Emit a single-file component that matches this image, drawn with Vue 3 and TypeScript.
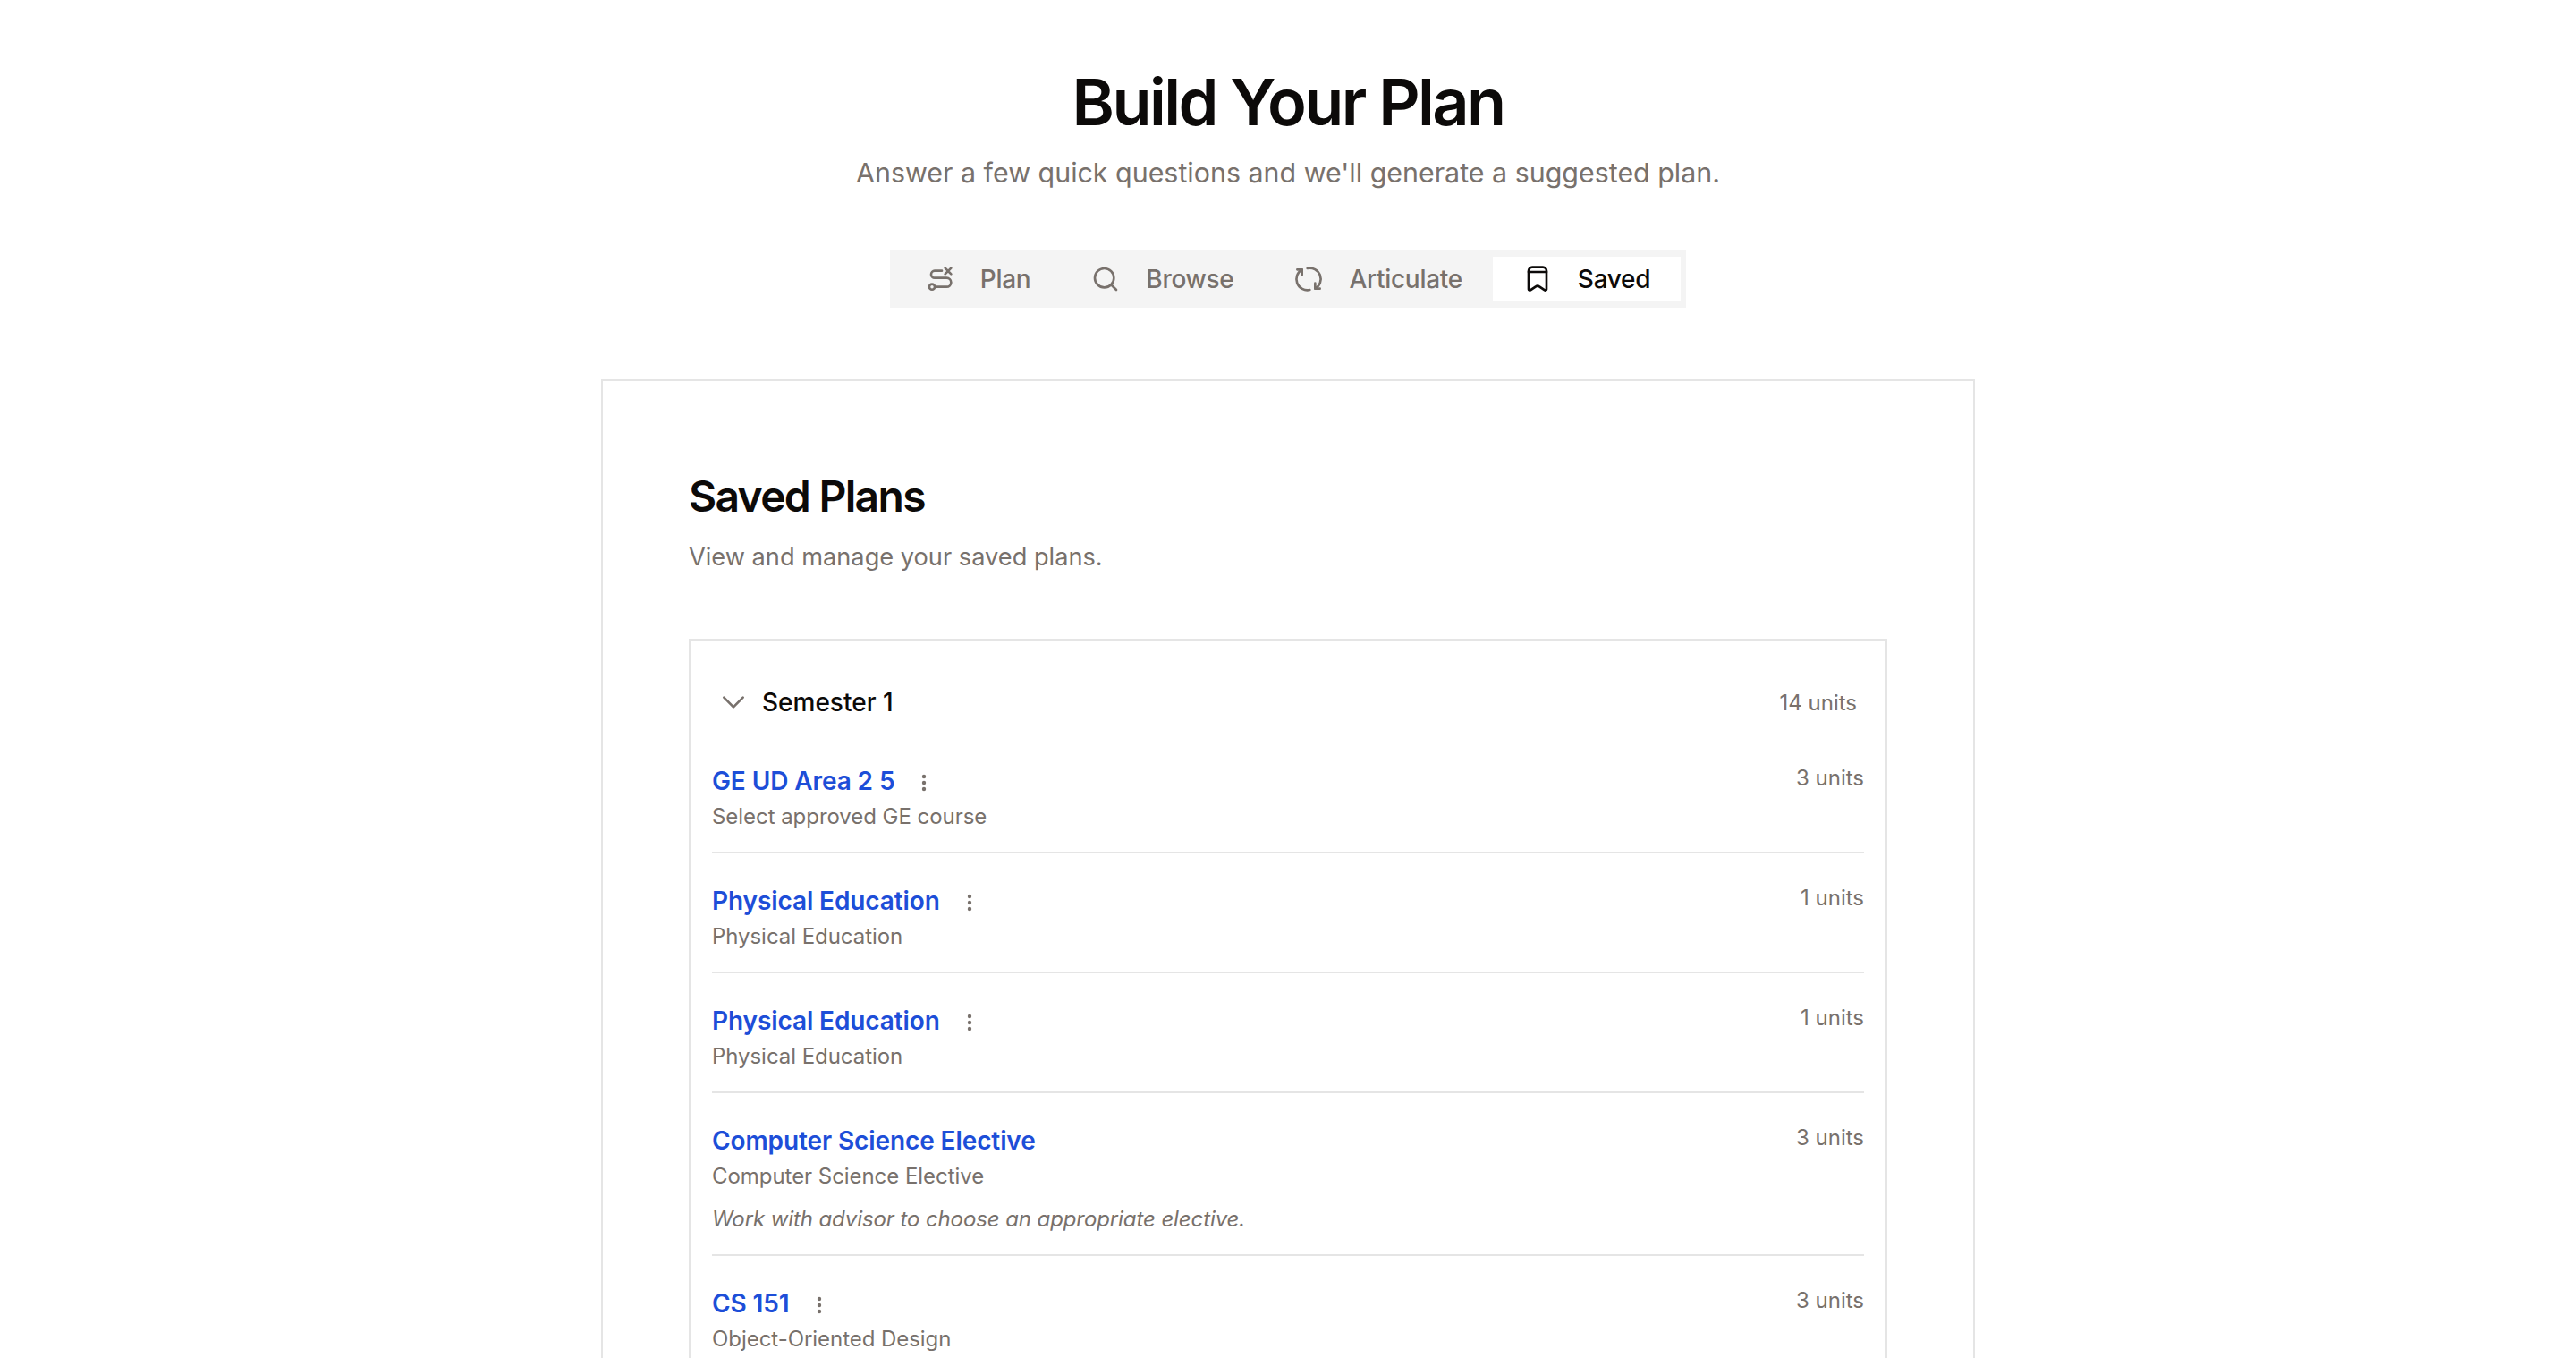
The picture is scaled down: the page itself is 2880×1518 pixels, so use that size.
<script setup lang="ts">
interface Course {
  title: string
  desc: string
  units: number
  note?: string
  menu: boolean
}

const tabs = [
  { id: 'plan', label: 'Plan' },
  { id: 'browse', label: 'Browse' },
  { id: 'articulate', label: 'Articulate' },
  { id: 'saved', label: 'Saved' },
]

const courses: Course[] = [
  { title: 'GE UD Area 2 5', desc: 'Select approved GE course', units: 3, menu: true },
  { title: 'Physical Education', desc: 'Physical Education', units: 1, menu: true },
  { title: 'Physical Education', desc: 'Physical Education', units: 1, menu: true },
  {
    title: 'Computer Science Elective',
    desc: 'Computer Science Elective',
    units: 3,
    note: 'Work with advisor to choose an appropriate elective.',
    menu: false,
  },
  { title: 'CS 151', desc: 'Object-Oriented Design', units: 3, menu: true },
]
</script>

<template>
  <div class="page">
    <h1 class="title">Build Your Plan</h1>
    <p class="subtitle">Answer a few quick questions and we'll generate a suggested plan.</p>

    <div class="tabs">
      <button v-for="tab in tabs" :key="tab.id" class="tab" :class="{ active: tab.id === 'saved' }">
        <svg class="tab-icon" viewBox="0 0 24 24">
          <template v-if="tab.id === 'plan'">
            <circle cx="5.250" cy="18.500" r="2.300" />
            <path d="M13.500 5H7.500a3 3 0 0 0 0 6h10a3.750 3.750 0 0 1 0 7.500H9" />
            <path d="m16.250 2.750 5 5M21.250 2.750l-5 5" />
          </template>
          <template v-else-if="tab.id === 'browse'">
            <circle cx="11" cy="11" r="8" />
            <path d="m21 21-4.300-4.300" />
          </template>
          <template v-else-if="tab.id === 'articulate'">
            <path d="M11 3a9.200 9.200 0 0 1 6.500 17" />
            <path d="M13 21a9.200 9.200 0 0 1-6.500-17" />
            <path d="M2.500 4h4v4.500" />
            <path d="M21.500 20h-4v-4.500" />
          </template>
          <template v-else>
            <path d="M4.500 5a3 3 0 0 1 3-3h9a3 3 0 0 1 3 3v15.500a1 1 0 0 1-1.500.8l-4.500-3a2.500 2.500 0 0 0-3 0l-4.500 3a1 1 0 0 1-1.500-.8Z" />
            <path d="M4.500 6h15" />
          </template>
        </svg>
        <span>{{ tab.label }}</span>
      </button>
    </div>

    <section class="card">
      <h2 class="card-title">Saved Plans</h2>
      <p class="card-sub">View and manage your saved plans.</p>

      <div class="semester">
        <div class="semester-head">
          <div class="semester-name">
            <svg class="chevron" viewBox="0 0 24 24"><path d="m4 8 8 8 8-8" /></svg>
            <span>Semester 1</span>
          </div>
          <span class="units">14 units</span>
        </div>

        <div v-for="(course, i) in courses" :key="i" class="course">
          <div class="course-main">
            <div class="course-top">
              <a class="course-title">{{ course.title }}</a>
              <svg v-if="course.menu" class="dots" viewBox="0 0 24 24">
                <circle cx="12" cy="5" r="2.200" />
                <circle cx="12" cy="12" r="2.200" />
                <circle cx="12" cy="19" r="2.200" />
              </svg>
            </div>
            <div class="course-desc">{{ course.desc }}</div>
            <div v-if="course.note" class="course-note">{{ course.note }}</div>
          </div>
          <span class="units course-units">{{ course.units }} units</span>
        </div>
      </div>
    </section>
  </div>
</template>

<style scoped>
.page {
  display: flex;
  flex-direction: column;
  align-items: center;
  height: 1518px;
  overflow: hidden;
  font-family: Inter, "Liberation Sans", sans-serif;
  color: #0c0a09;
}

.title {
  margin: 0;
  padding-top: 74px;
  font-size: 72px;
  line-height: 80px;
  font-weight: 600;
  letter-spacing: -2.6px;
}

.subtitle {
  margin: 15px 0 0;
  font-size: 30.4px;
  line-height: 48px;
  color: #78716c;
}

.tabs {
  display: flex;
  flex-shrink: 0;
  margin-top: 63px;
  padding: 7px 6px;
  background: #f4f4f4;
}

.tab {
  display: flex;
  align-items: center;
  gap: 29px;
  height: 50px;
  padding: 0 34px;
  border: none;
  background: none;
  font: inherit;
  font-size: 28px;
  font-weight: 500;
  letter-spacing: -0.3px;
  color: #78716c;
}

.tab.active {
  background: #fff;
  color: #0c0a09;
}

.tab-icon {
  width: 32px;
  height: 32px;
  fill: none;
  stroke: currentColor;
  stroke-width: 2;
  stroke-linecap: round;
  stroke-linejoin: round;
}

.card {
  box-sizing: border-box;
  flex-shrink: 0;
  width: 1536px;
  margin-top: 80px;
  padding: 96px 96px 0;
  border: 2px solid #e5e5e5;
}

.card-title {
  margin: 0;
  font-size: 48px;
  line-height: 65px;
  font-weight: 600;
  letter-spacing: -1.7px;
}

.card-sub {
  margin: 16px 0 0;
  font-size: 27.2px;
  line-height: 40px;
  color: #78716c;
}

.semester {
  margin-top: 71px;
  padding: 0 24px;
  border: 2px solid #e5e5e5;
}

.semester-head {
  box-sizing: border-box;
  display: flex;
  align-items: center;
  justify-content: space-between;
  height: 104px;
  padding: 34px 8px 0;
}

.semester-name {
  display: flex;
  align-items: center;
  gap: 16px;
  font-size: 28px;
  font-weight: 500;
}

.chevron {
  width: 32px;
  height: 32px;
  fill: none;
  stroke: #78716c;
  stroke-width: 2;
  stroke-linecap: round;
  stroke-linejoin: round;
}

.units {
  font-size: 24px;
  color: #78716c;
}

.course {
  display: flex;
  justify-content: space-between;
  padding: 35px 0 21px;
  border-bottom: 2px solid #e5e5e5;
}

.course:last-child {
  border-bottom: none;
}

.course-top {
  display: flex;
  align-items: center;
  gap: 21px;
  height: 36px;
}

.course-title {
  font-size: 28px;
  font-weight: 600;
  letter-spacing: -0.1px;
  color: #1d4ed8;
}

.dots {
  width: 24px;
  height: 24px;
  margin-top: 4px;
  fill: #78716c;
}

.course-desc {
  margin-top: 4px;
  font-size: 24px;
  line-height: 36px;
  letter-spacing: -0.05px;
  color: #78716c;
}

.course-note {
  margin-top: 12px;
  font-size: 24px;
  line-height: 36px;
  font-style: italic;
  letter-spacing: -0.1px;
  color: #78716c;
}

.course-units {
  margin-top: -1px;
  line-height: 32px;
}
</style>

<style>
body {
  background: #fff;
}
</style>
